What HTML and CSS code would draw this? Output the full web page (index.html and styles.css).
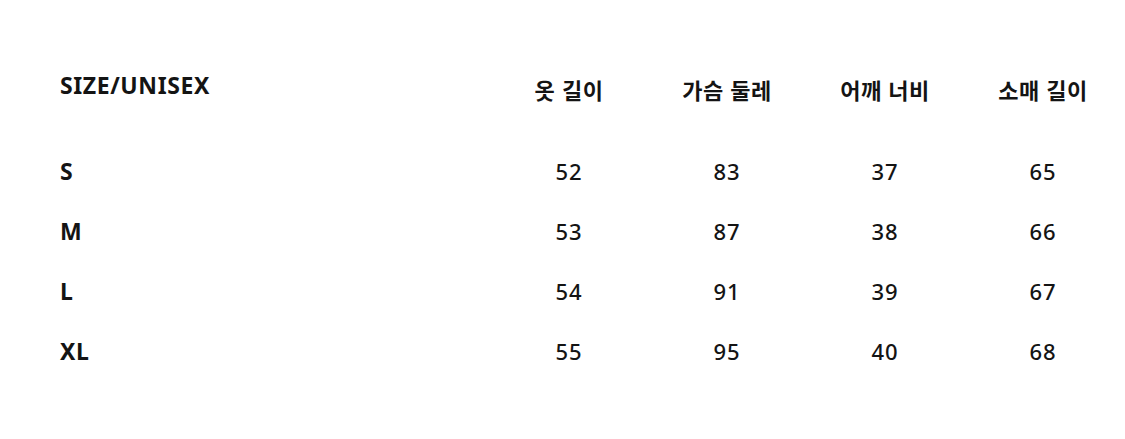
FILE: index.html
```html
<!DOCTYPE html>
<html lang="ko">
<head>
<meta charset="utf-8">
<link rel="stylesheet" href="styles.css">
</head>
<body>
<div class="table">
  <div class="row head">
    <div class="size">SIZE/UNISEX</div>
    <div class="cell kr">옷 길이</div>
    <div class="cell kr">가슴 둘레</div>
    <div class="cell kr">어깨 너비</div>
    <div class="cell kr">소매 길이</div>
  </div>
  <div class="row">
    <div class="size">S</div>
    <div class="cell">52</div><div class="cell">83</div><div class="cell">37</div><div class="cell">65</div>
  </div>
  <div class="row">
    <div class="size">M</div>
    <div class="cell">53</div><div class="cell">87</div><div class="cell">38</div><div class="cell">66</div>
  </div>
  <div class="row">
    <div class="size">L</div>
    <div class="cell">54</div><div class="cell">91</div><div class="cell">39</div><div class="cell">67</div>
  </div>
  <div class="row">
    <div class="size">XL</div>
    <div class="cell">55</div><div class="cell">95</div><div class="cell">40</div><div class="cell">68</div>
  </div>
</div>
</body>
</html>
```
FILE: styles.css
```css
html, body {
  margin: 0;
  padding: 0;
  background: #ffffff;
}
body {
  width: 1125px;
  height: 439px;
  overflow: hidden;
  font-family: "Noto Sans", "Noto Sans CJK KR", sans-serif;
  color: #141414;
}
.table {
  padding: 55px 0 0 60px;
  display: flex;
  flex-direction: column;
}
.row {
  display: grid;
  grid-template-columns: 430px repeat(4, 158px);
  height: 60px;
  align-items: center;
  font-size: 22px;
  font-weight: 500;
  line-height: 1;
  letter-spacing: 1px;
}
.row.head {
  margin-bottom: 26px;
}
.size {
  font-weight: 700;
  font-size: 23px;
  letter-spacing: 0.6px;
}
.cell {
  text-align: center;
}
.kr {
  font-family: "Noto Sans CJK KR", sans-serif;
  font-weight: 700;
  font-size: 22px;
  letter-spacing: 0.5px;
  padding-top: 7px;
}
```
